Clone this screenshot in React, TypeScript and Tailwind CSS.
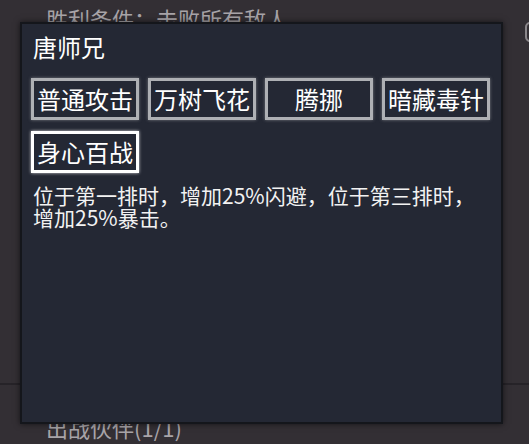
import React from 'react';

const skills = ['普通攻击', '万树飞花', '腾挪', '暗藏毒针', '身心百战'];

export default function App() {
  const selected = '身心百战';

  return (
    <div
      className="relative w-[529px] h-[444px] overflow-hidden bg-[#332f34] text-white"
      style={{ fontFamily: '"Noto Sans CJK SC", "Noto Sans", sans-serif' }}
    >
      {/* Background page */}
      <div className="flex flex-col h-full">
        <div className="pl-[46px] pt-[4px] text-[22px] leading-[28px] text-[#a8a4a8]">胜利条件：击败所有敌人</div>
        <div className="flex-1" />
        <div className="h-[2px] bg-[#262328]" />
        <div className="h-[28px]" />
        <div className="pl-[46px] text-[22px] leading-[28px] text-[#a8a4a8] mb-[3px]">出战伙伴(1/1)</div>
      </div>
      <div className="absolute right-[-6px] top-[22px] w-[10px] h-[20px] rounded-full border-2 border-[#8a868a]" />

      {/* Skill popup */}
      <div className="absolute left-[20px] top-[22px] w-[483px] h-[402px] bg-[#242834] border-2 border-[#14161b] shadow-[0_0_6px_rgba(0,0,0,0.6)]">
        <div className="pl-[9px] pt-[9px]">
          <div className="pl-[2px] text-[24px] leading-[28px] text-white">唐师兄</div>
          <div className="mt-[17px] w-[470px] flex flex-wrap gap-x-[9px] gap-y-[11px]">
            {skills.map((s) => (
              <div
                key={s}
                className={
                  s === selected
                    ? 'w-[108px] h-[42px] flex items-center justify-center border-[3px] border-white shadow-[0_0_3px_rgba(255,255,255,0.8)] text-[24px] leading-none text-white'
                    : 'w-[108px] h-[42px] flex items-center justify-center border-[3px] border-[#aeb0b4] shadow-[0_0_3px_rgba(200,200,200,0.5)] text-[24px] leading-none text-white'
                }
              >
                {s}
              </div>
            ))}
          </div>
          <div className="mt-[11px] pl-[2px] text-[21px] leading-[22px] text-[#f2f2f2]">
            位于第一排时，增加25%闪避，位于第三排时，
            <br />
            增加25%暴击。
          </div>
        </div>
      </div>
    </div>
  );
}
